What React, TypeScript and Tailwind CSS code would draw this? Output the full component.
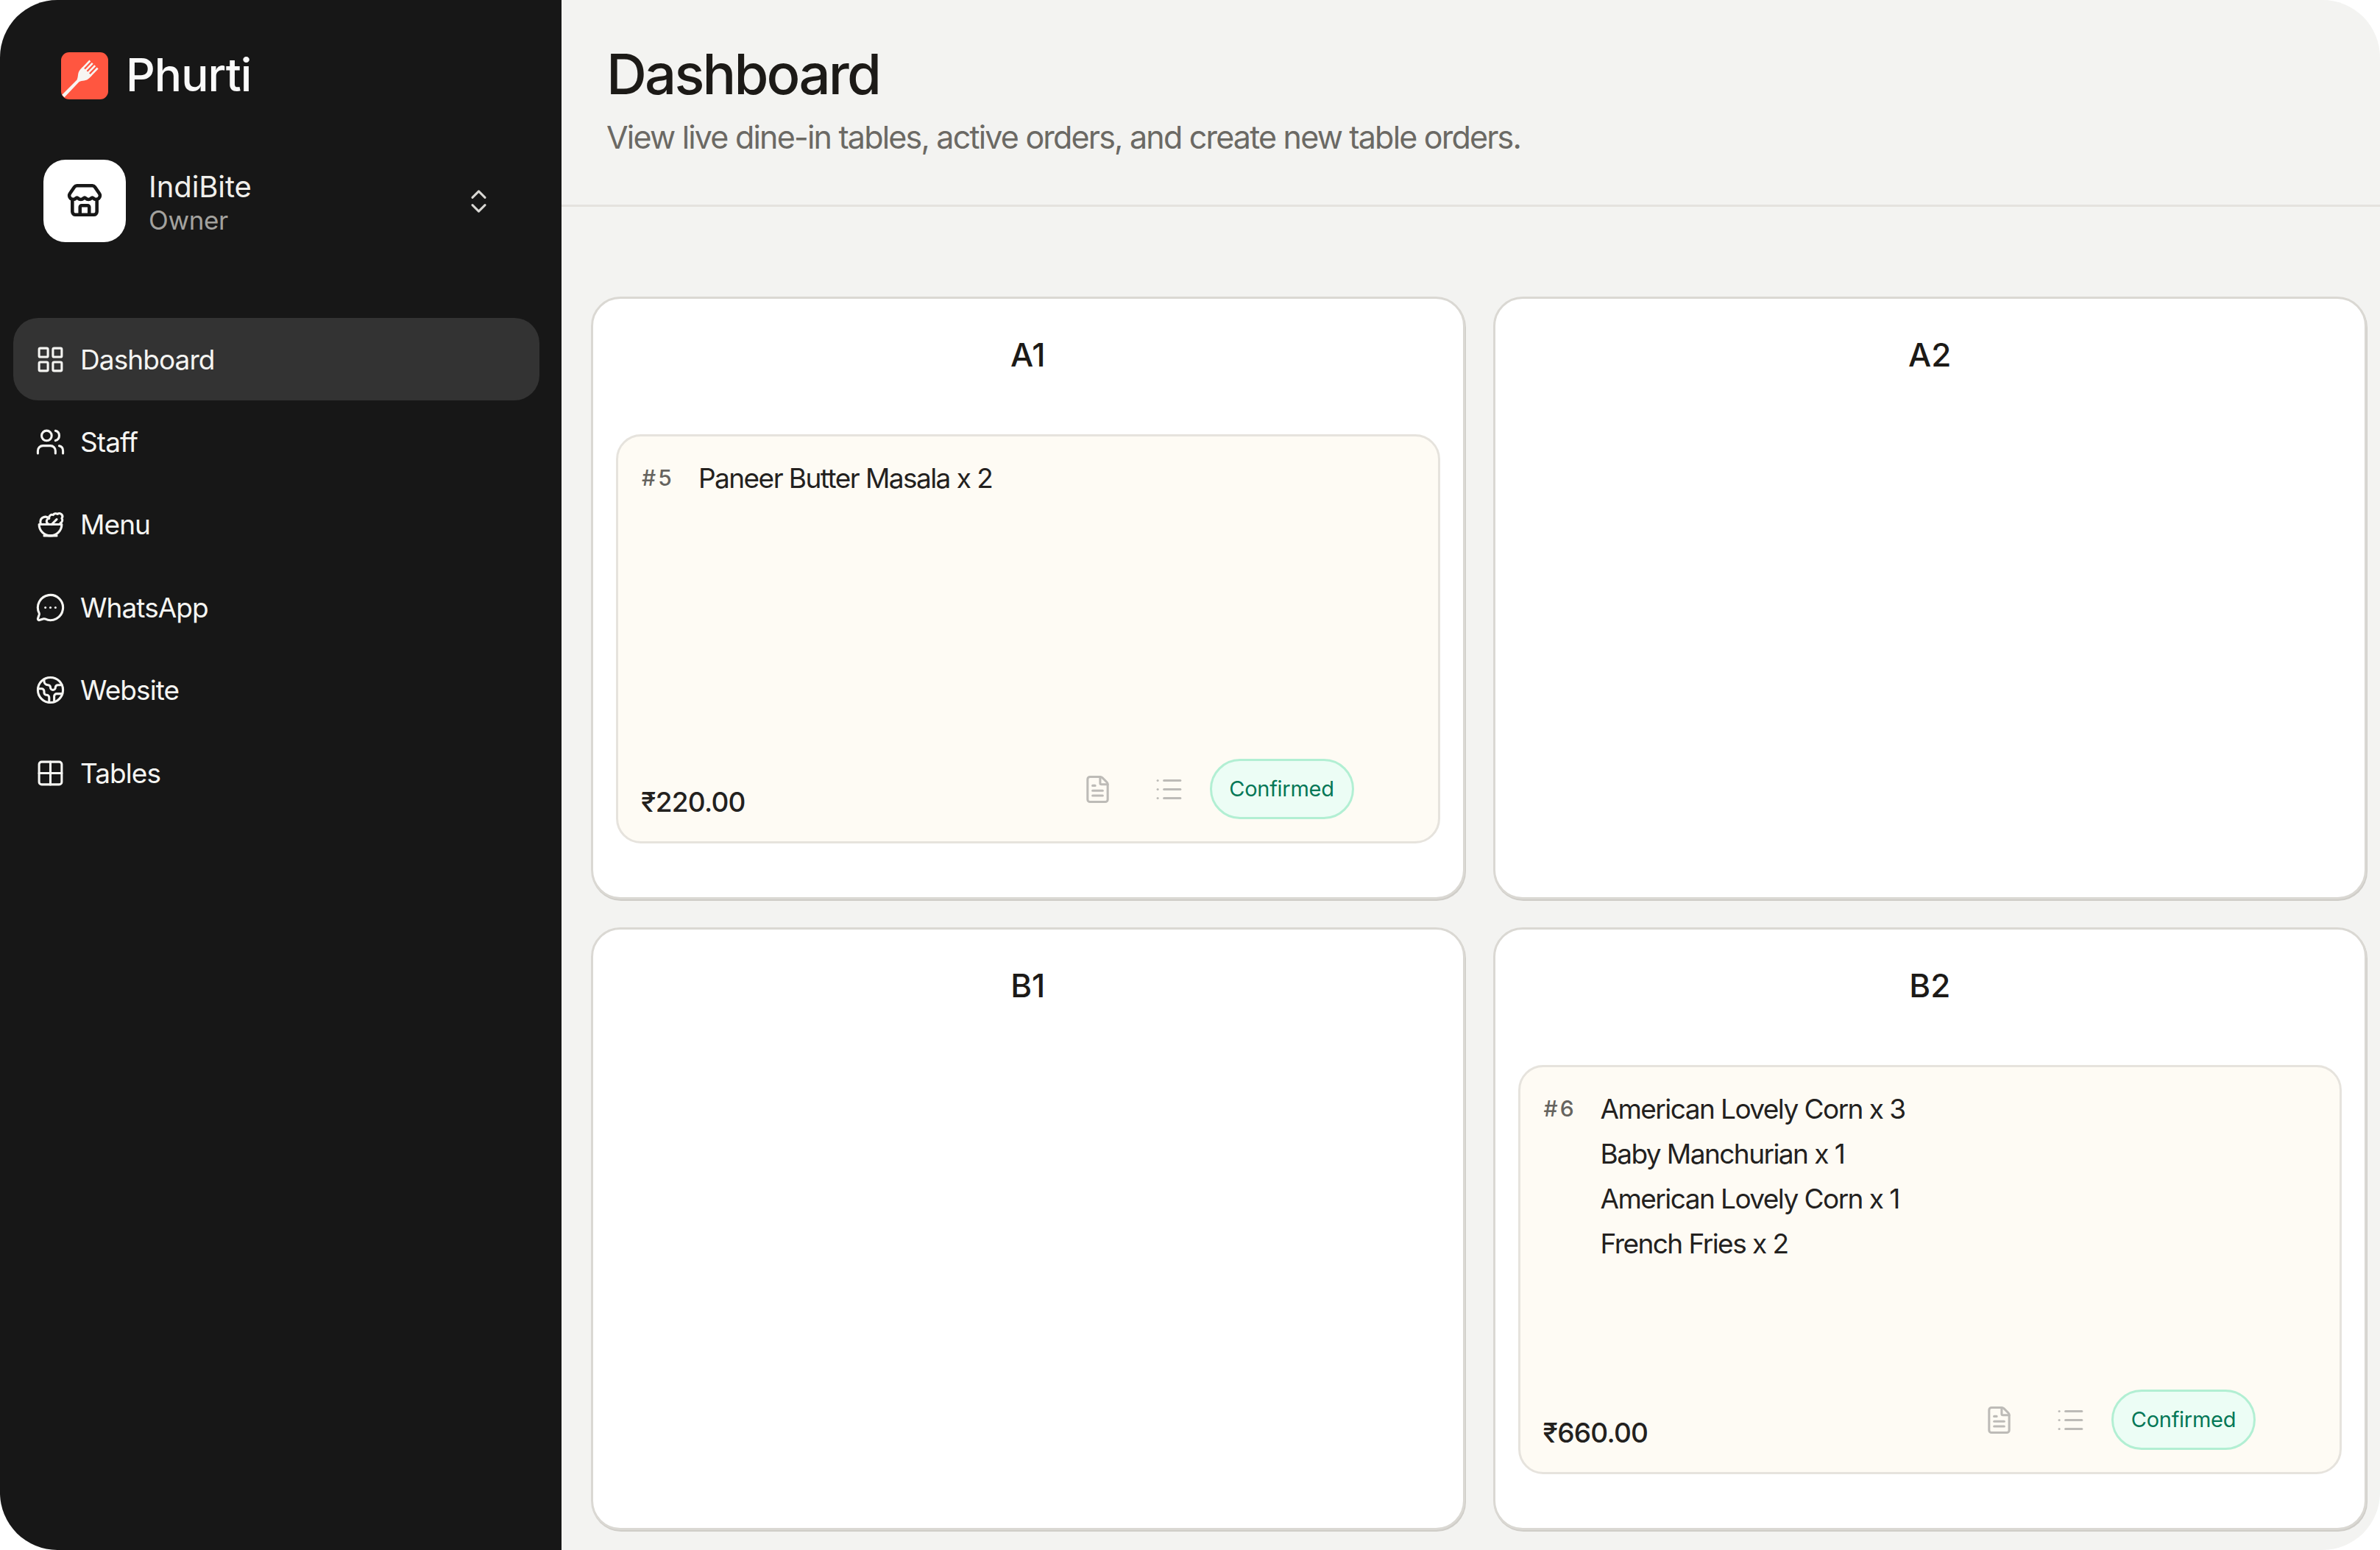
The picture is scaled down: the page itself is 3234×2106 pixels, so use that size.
import { ChevronsUpDown, Earth, FileText, Grid2x2, LayoutGrid, List, MessageCircleMore, Salad, Store, Users } from "lucide-react";

const NAV_ITEMS = [
  { label: "Dashboard", icon: LayoutGrid },
  { label: "Staff", icon: Users },
  { label: "Menu", icon: Salad },
  { label: "WhatsApp", icon: MessageCircleMore },
  { label: "Website", icon: Earth },
  { label: "Tables", icon: Grid2x2 },
];

interface Order {
  id: number;
  items: string[];
  total: string;
}

const TABLES: Array<{ name: string; order?: Order }> = [
  { name: "A1", order: { id: 5, items: ["Paneer Butter Masala x 2"], total: "₹220.00" } },
  { name: "A2" },
  { name: "B1" },
  {
    name: "B2",
    order: {
      id: 6,
      items: ["American Lovely Corn x 3", "Baby Manchurian x 1", "American Lovely Corn x 1", "French Fries x 2"],
      total: "₹660.00",
    },
  },
];

function Logo() {
  return (
    <svg viewBox="0 0 64 64" className="h-[64px] w-[64px] shrink-0 overflow-hidden rounded-[11px]">
      <rect width="64" height="64" fill="#ff5640" />
      <g transform="translate(44.5 16.5) rotate(44)" fill="#f7f5f2">
        <path d="M-8.5 13H8.5V17C8.5 24 3.5 26 2 31L2.4 60H-2.4L-2 31C-3.5 26-8.5 24-8.5 17Z" />
        <rect x="-8.5" y="0" width="2.6" height="15" />
        <rect x="-3.7" y="0" width="2.6" height="15" />
        <rect x="1.1" y="0" width="2.6" height="15" />
        <rect x="5.9" y="0" width="2.6" height="15" />
      </g>
    </svg>
  );
}

function Sidebar() {
  return (
    <aside className="flex w-[763px] shrink-0 flex-col bg-[#171717] pt-[71px] pr-[30px]">
      <div className="flex h-[64px] items-center gap-[24px] pl-[83px]">
        <Logo />
        <span className="-mt-[3px] text-[62px] leading-none font-medium tracking-[-0.015em] text-[#fafafa]">Phurti</span>
      </div>

      <div className="mt-[82px] flex h-[112px] items-center pr-[62px] pl-[59px]">
        <div className="flex h-[112px] w-[112px] items-center justify-center rounded-[30px] bg-white">
          <Store size={50} strokeWidth={2.2} className="text-[#171717]" />
        </div>
        <div className="ml-[31px] flex-1 pt-[3px]">
          <div className="text-[40px] leading-[48px] tracking-[-0.002em] text-[#f0efeb]">IndiBite</div>
          <div className="text-[35px] leading-[42px] tracking-[-0.01em] text-[#a3a29e]">Owner</div>
        </div>
        <ChevronsUpDown size={41} strokeWidth={1.8} className="text-[#d8d7d3]" />
      </div>

      <nav className="mt-[103px] flex flex-col pl-[18px]">
        {NAV_ITEMS.map((item, i) => (
          <div
            key={item.label}
            className={`flex h-[112.4px] items-center gap-[20px] rounded-[34px] pl-[30px] text-[#f5f5f2] ${i === 0 ? "bg-[#333333]" : ""}`}
          >
            <item.icon size={41} strokeWidth={1.8} />
            <span className="text-[37px] leading-none tracking-[-0.025em]">{item.label}</span>
          </div>
        ))}
      </nav>
    </aside>
  );
}

function OrderCard({ order }: { order: Order }) {
  return (
    <div className="mt-[79px] flex h-[556px] flex-col justify-between rounded-[34px] border-[3px] border-[#e6e3dd] bg-[#fefbf4] pr-[114px] pb-[30px] pl-[31px]">
      <div className="flex pt-[26px]">
        <span className="w-[78px] shrink-0 pl-[1px] text-[30px] leading-[61px] font-medium tracking-[0.1em] text-[#66645f]">#{order.id}</span>
        <div className="text-[37px] leading-[61px] tracking-[-0.042em] text-[#23211e]">
          {order.items.map((line, i) => (
            <div key={i}>{line}</div>
          ))}
        </div>
      </div>
      <div className="flex items-end justify-between">
        <span className="mb-[-1px] text-[37px] leading-[48px] font-medium tracking-[-0.02em] text-[#23211e]">{order.total}</span>
        <div className="flex items-center">
          <FileText size={41} strokeWidth={1.8} className="text-[#bdbbb7]" />
          <List size={41} strokeWidth={1.8} className="ml-[56px] text-[#bdbbb7]" />
          <span className="ml-[35px] flex h-[82px] w-[196px] items-center justify-center rounded-full border-[3px] border-[#b2efd3] bg-[#ecfdf5] text-[29px] font-normal tracking-[-0.01em] text-[#047857]">
            Confirmed
          </span>
        </div>
      </div>
    </div>
  );
}

function TableCard({ name, order }: { name: string; order?: Order }) {
  return (
    <div className="h-[819px] rounded-[40px] border-[3px] border-[#dad8d3] bg-white px-[31px] pt-[47px] shadow-[1px_2px_0_#cfcdc8]">
      <h2 className="text-center text-[44px] leading-[58px] font-medium text-[#1c1a17]">{name}</h2>
      {order && <OrderCard order={order} />}
    </div>
  );
}

export default function App() {
  return (
    <div className="h-[2106px] w-[3234px] bg-white font-['Inter',sans-serif]">
      <div className="flex h-full overflow-hidden rounded-[78px] bg-[#f3f3f1]">
        <Sidebar />
        <main className="min-w-0 flex-1">
          <header className="h-[281px] border-b-[3px] border-[#e4e2de] pt-[55px] pl-[61px]">
            <h1 className="text-[76px] leading-[90px] font-medium tracking-[-0.037em] text-[#1c1a17]">Dashboard</h1>
            <p className="mt-[15px] text-[43px] leading-[52px] tracking-[-0.042em] text-[#6b6964]">
              View live dine-in tables, active orders, and create new table orders.
            </p>
          </header>
          <div className="grid grid-cols-2 gap-[38px] pt-[122px] pr-[18px] pl-[40px]">
            {TABLES.map((table) => (
              <TableCard key={table.name} name={table.name} order={table.order} />
            ))}
          </div>
        </main>
      </div>
    </div>
  );
}
